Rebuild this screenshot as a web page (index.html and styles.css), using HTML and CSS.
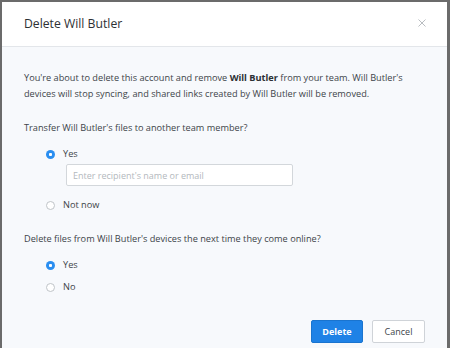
FILE: index.html
```html
<!DOCTYPE html>
<html>
<head>
<meta charset="utf-8">
<link rel="stylesheet" href="styles.css">
</head>
<body>
<div class="dialog">
  <div class="header">
    <h1 class="title">Delete Will Butler</h1>
    <span class="close">
      <svg width="8" height="8" viewBox="0 0 8 8"><path d="M0.5 0.5L7.5 7.5M7.5 0.5L0.5 7.5" stroke="#b9bdc1" stroke-width="1" fill="none"/></svg>
    </span>
  </div>
  <div class="content">
    <p class="intro">You're about to delete this account and remove <b>Will Butler</b> from your team. Will Butler's devices will stop syncing, and shared links created by Will Butler will be removed.</p>
    <p class="question q1">Transfer Will Butler's files to another team member?</p>
    <div class="options">
      <label class="option"><span class="radio checked"></span>Yes</label>
      <div class="field"><input class="input" type="text" placeholder="Enter recipient's name or email"></div>
      <label class="option"><span class="radio"></span>Not now</label>
    </div>
    <p class="question q2">Delete files from Will Butler's devices the next time they come online?</p>
    <div class="options">
      <label class="option"><span class="radio checked"></span>Yes</label>
      <label class="option"><span class="radio"></span>No</label>
    </div>
    <div class="actions">
      <button class="btn primary">Delete</button>
      <button class="btn secondary">Cancel</button>
    </div>
  </div>
</div>
</body>
</html>
```
FILE: styles.css
```css
html, body {
  margin: 0;
  padding: 0;
  background: #6b6b6b;
  height: 100%;
  overflow: hidden;
}
body {
  padding: 2px 3px 0 2px;
  box-sizing: border-box;
  font-family: "Open Sans", "Liberation Sans", sans-serif;
}
.dialog {
  background: #f7f9fc;
  height: 400px;
}
.header {
  background: #fff;
  height: 44px;
  border-bottom: 1px solid #e3e6ea;
  display: flex;
  align-items: center;
  justify-content: space-between;
  padding: 0 21px 2px 22px;
  box-sizing: border-box;
  height: 45px;
}
.title {
  margin: 0;
  font-size: 12.2px;
  font-weight: 400;
  color: #2d3033;
}
.close {
  display: flex;
  width: 8px;
  height: 8px;
}
.content {
  padding: 23px 22px 0 22px;
  color: #3d4449;
  font-size: 9.2px;
  line-height: 16px;
}
.intro {
  margin: 0;
}
.intro b {
  font-weight: 700;
  color: #2b3034;
}
.question {
  margin: 0;
}
.q1 { margin-top: 18px; }
.q2 { margin-top: 18px; }
.options {
  padding-left: 22px;
  display: flex;
  flex-direction: column;
}
.options .option:first-child { margin-top: 10px; }
.option {
  display: flex;
  align-items: center;
  height: 16px;
  color: #3d4449;
}
.option + .option { margin-top: 6px; }
.field {
  padding-left: 20px;
  margin-top: 2px;
  margin-bottom: 11px;
  display: flex;
}
.input {
  box-sizing: border-box;
  width: 227px;
  height: 22px;
  border: 1px solid #d3d7db;
  border-radius: 2px;
  background: #fff;
  font-family: inherit;
  font-size: 9px;
  padding: 0 6px;
  margin: 0;
  outline: none;
}
.input::placeholder { color: #b3b8bd; }
.radio {
  box-sizing: border-box;
  width: 9px;
  height: 9px;
  border-radius: 50%;
  border: 1px solid #bfc4c8;
  background: #fff;
  margin-right: 8px;
  flex: none;
}
.radio.checked {
  border: none;
  background: radial-gradient(circle, #fff 0 1.3px, #2a8ef0 1.8px);
}
.actions {
  display: flex;
  justify-content: flex-end;
  gap: 9px;
  margin-top: 25px;
  padding-right: 0;
}
.btn {
  box-sizing: border-box;
  height: 23px;
  border-radius: 2px;
  font-family: inherit;
  font-size: 9px;
  padding: 0;
  margin: 0;
}
.primary {
  width: 52px;
  background: #1f82e6;
  border: 1px solid #1a74cf;
  color: #fff;
  font-weight: 700;
}
.secondary {
  width: 53px;
  background: #fff;
  border: 1px solid #cfd3d8;
  color: #3d4449;
}
```
